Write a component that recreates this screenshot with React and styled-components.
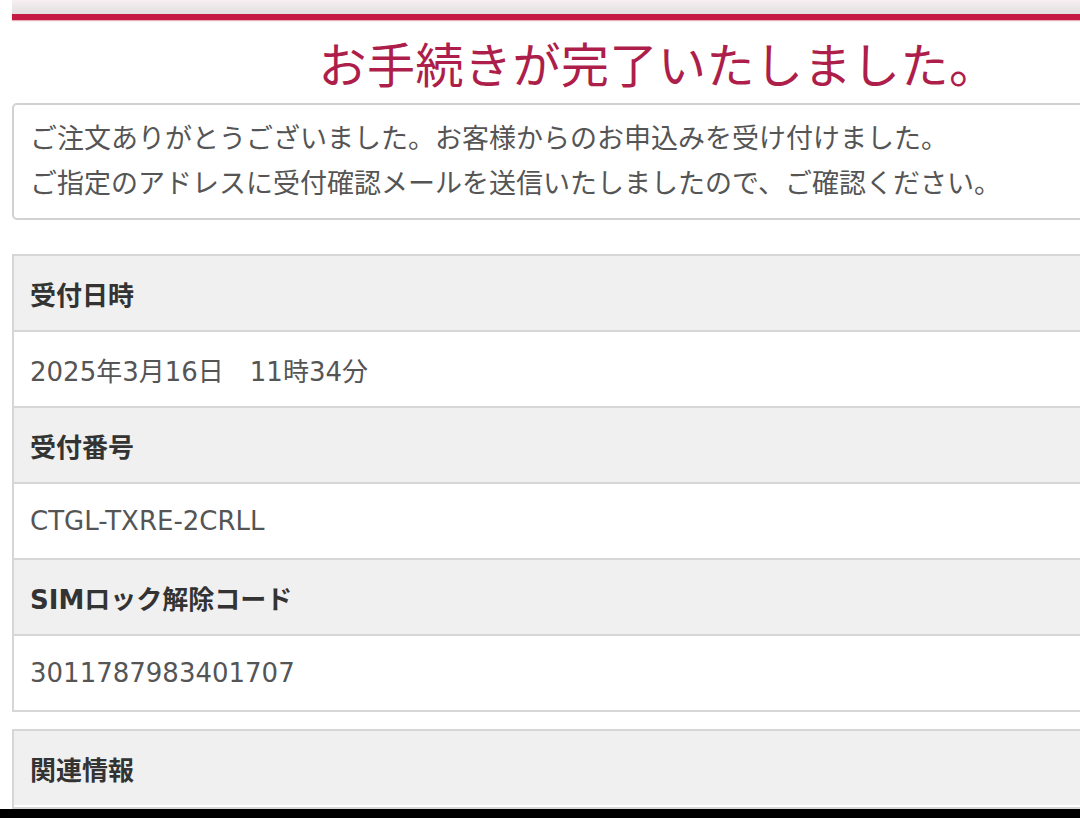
import styled, { createGlobalStyle } from "styled-components";

const GlobalStyle = createGlobalStyle`
    html, body {
        margin: 0;
        padding: 0;
        background: #ffffff;
        overflow: hidden;
    }
    body {
        font-family: "DejaVu Sans", "Noto Sans CJK JP", sans-serif;
    }
`;

const Screen = styled.div`
    width: 1080px;
    height: 818px;
    overflow: hidden;
    display: flex;
    flex-direction: column;
`;

const Page = styled.div`
    width: 1292px;
    padding-left: 12px;
    display: flex;
    flex-direction: column;
    flex: 1;
`;

const TopStrip = styled.div`
    height: 14px;
    background: linear-gradient(#f7eff2, #e2dfe0);
`;

const RedBar = styled.div`
    height: 6px;
    background: #c41a43;
    box-shadow: 0 1px 1px rgba(196, 26, 67, 0.35);
`;

const Title = styled.h1`
    margin: 0;
    height: 83px;
    display: flex;
    align-items: center;
    justify-content: center;
    font-family: "Noto Sans CJK JP", sans-serif;
    font-weight: 400;
    font-size: 48px;
    color: #ad1f4a;
    letter-spacing: 0.5px;
`;

const Message = styled.div`
    border: 2px solid #d2d2d2;
    border-radius: 5px;
    padding: 11px 16px 12px;
    font-size: 27px;
    line-height: 45px;
    color: #555555;
`;

const Table = styled.div`
    margin-top: ${({ gap }) => gap}px;
    border-left: 2px solid #d6d6d6;
    border-bottom: 2px solid #d6d6d6;
    display: flex;
    flex-direction: column;
`;

const Row = styled.div`
    height: 74px;
    border-top: 2px solid #d6d6d6;
    display: flex;
    align-items: center;
    padding-left: 16px;
    font-size: 26px;
    background: ${({ head }) => (head ? "#f0f0f0" : "#ffffff")};
    color: ${({ head }) => (head ? "#333333" : "#555555")};
    font-weight: ${({ head }) => (head ? 700 : 400)};
`;

const Spacer = styled.div`
    height: 2px;
    background: #ffffff;
`;

const Bottom = styled.div`
    height: 10px;
    background: #000000;
    margin-top: auto;
`;

const items = [
    ["受付日時", "2025年3月16日　11時34分"],
    ["受付番号", "CTGL-TXRE-2CRLL"],
    ["SIMロック解除コード", "3011787983401707"],
];

const App = () => {
    return (
        <Screen>
            <GlobalStyle />
            <Page>
                <TopStrip />
                <RedBar />
                <Title>お手続きが完了いたしました。</Title>
                <Message>
                    ご注文ありがとうございました。お客様からのお申込みを受け付けました。
                    <br />
                    ご指定のアドレスに受付確認メールを送信いたしましたので、ご確認ください。
                </Message>
                <Table gap={34}>
                    {items.map(([label, value]) => (
                        <div key={label}>
                            <Row head>{label}</Row>
                            <Row>{value}</Row>
                        </div>
                    ))}
                </Table>
                <Table gap={17}>
                    <Row head>関連情報</Row>
                    <Spacer />
                </Table>
            </Page>
            <Bottom />
        </Screen>
    );
};

export default App;
